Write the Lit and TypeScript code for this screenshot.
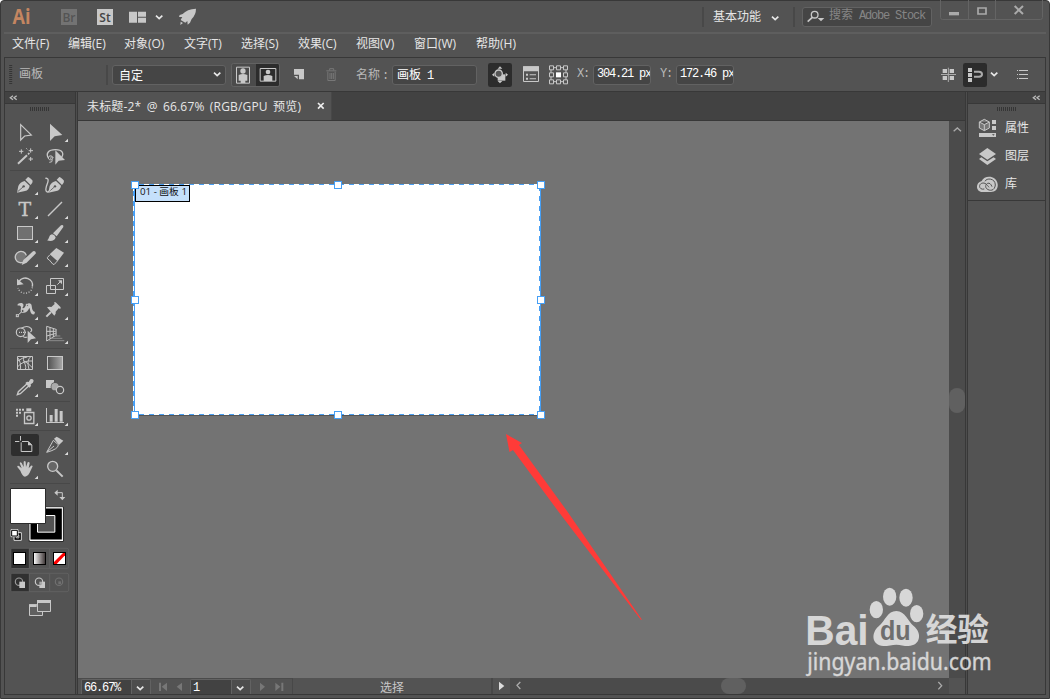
import { LitElement, html, css, svg, type SVGTemplateResult } from "lit";
import { customElement } from "lit/decorators.js";

const C = "#c8c8c8";

// Icons are drawn on a grid of three units to one pixel.
const icon = (x: number, y: number, w: number, h: number, body: SVGTemplateResult) =>
  html`<svg width=${w / 3} height=${h / 3} viewBox="${x} ${y} ${w} ${h}" fill=${C}>${body}</svg>`;

const chevron = icon(0, 0, 33, 27, svg`<path d="M6 8L15.500 17L25 8" fill="none" stroke="#e8e8e8" stroke-width="5"/>`);

type Tool = { x: number; y: number; more?: boolean; active?: boolean; body: SVGTemplateResult };

const nib = svg`<path d="M51 308L55 288Q60 276 74 273L89 287Q87 300 75 303Z M76 269L84 261Q88 261 98 272Q99 277 92 285Z"/>
  <path d="M53 305L69 291" stroke="#535353" stroke-width="2.500"/><circle cx="71" cy="289" r="3.500" fill="#535353"/>`;

const groups: Tool[][] = [
  [
    { x: 30, y: 90, body: svg`<path d="M62 104V150L74 138L94 135Z" fill="none" stroke=${C} stroke-width="3.500"/>` },
    { x: 120, y: 90, more: true, body: svg`<path d="M150 101V153L164 139L187 135Z"/>` },
    { x: 30, y: 162, body: svg`<path d="M54 221L81 196" stroke=${C} stroke-width="6"/><path d="M84 193L88 189" stroke=${C} stroke-width="5"/>
      <path d="M57 184H70M64 178V191M86 182H99M92 175V188M86 207H99M92 201V213M79 175L82 178" stroke=${C} stroke-width="3"/>` },
    { x: 120, y: 162, body: svg`<path d="M146 205C136 191 145 179 166 179C188 179 193 190 184 203" fill="none" stroke=${C} stroke-width="4"/>
      <path d="M160 203C155 194 142 197 146 207C149 212 159 209 158 203C156 198 150 203 153 207M157 208Q158 218 148 217" fill="none" stroke=${C} stroke-width="3"/>
      <path d="M166 181V224L176 212L195 210Z"/>` },
  ],
  [
    { x: 30, y: 249, more: true, body: nib },
    { x: 120, y: 249, body: svg`<g transform="translate(94 0)">${nib}</g><path d="M136 265C151 263 142 280 139 290C134 309 146 311 151 297" fill="none" stroke=${C} stroke-width="4"/>` },
    { x: 30, y: 321, more: true, body: svg`<text x="74.500" y="378" text-anchor="middle" font-family="DejaVu Serif" font-size="57" stroke=${C} stroke-width="1">T</text>` },
    { x: 120, y: 321, more: true, body: svg`<path d="M144 378L186 336" stroke=${C} stroke-width="4"/>` },
    { x: 30, y: 393, more: true, body: svg`<rect x="52.500" y="409.500" width="45" height="39" fill="#707070" stroke=${C} stroke-width="3"/>` },
    { x: 120, y: 393, more: true, body: svg`<path d="M141 451C149 448 145 435 156 433Q163 433 167 442C165 453 151 456 141 451M159 430L183 406Q191 402 190 411L170 439Z"/>` },
    { x: 30, y: 465, more: true, body: svg`<path d="M71 516A17 17 0 1 1 79 496" fill="#777" stroke=${C} stroke-width="4"/><path d="M65 525L70 510L99 484Q106 481 108 490L80 518Z"/>` },
    { x: 120, y: 465, more: true, body: svg`<path d="M149 493L169 474L192 488L173 514Z"/><path d="M149 495L142 503Q142 508 148 510L159 523L163 523L172 513" fill="none" stroke=${C} stroke-width="3"/>` },
  ],
  [
    { x: 30, y: 18, more: true, body: svg`<path d="M57 40A22 21 0 0 1 97 56" fill="none" stroke=${C} stroke-width="4.500"/><path d="M97 58A22 21 0 0 1 54 60" fill="none" stroke=${C} stroke-width="4" stroke-dasharray="3 5"/><path d="M51 32V52L71 49Z"/>` },
    { x: 120, y: 18, more: true, body: svg`<path d="M151.500 31.500H190.500V64.500H151.500ZM139.500 52.500H166.500V76.500H139.500ZM172 50L182 40" fill="none" stroke=${C} stroke-width="3"/><path d="M174 37H186V49Z"/>` },
    { x: 30, y: 90, more: true, body: svg`<path d="M53 108C69 100 75 111 67 120C76 124 76 107 88 106C101 107 90 128 105 132L103 139C88 141 92 123 88 120C83 130 77 139 63 131L62 125C64 119 64 111 53 113Z"/>
      <path d="M52 143L68 129L81 113" stroke=${C} stroke-width="3"/><g fill="#535353" stroke=${C} stroke-width="3"><rect x="49" y="140" width="6" height="6"/><circle cx="68" cy="129" r="4.500"/><rect x="79" y="109" width="6" height="6"/></g>` },
    { x: 120, y: 90, more: true, body: svg`<path d="M139 146L153 132" stroke=${C} stroke-width="6"/><path d="M141 118L148 116L154 117L164 108L162 103L167 103L182 118L181 123L176 121L167 131L167 137L163 143Z"/>` },
    { x: 30, y: 162, more: true, body: svg`<circle cx="62" cy="193" r="13" fill="none" stroke=${C} stroke-width="3.500"/><path d="M64 181Q82 170 93 181Q98 188 91 192M69 205Q75 210 82 207" fill="none" stroke=${C} stroke-width="3.500"/><path d="M57 193H80" stroke=${C} stroke-width="4" stroke-dasharray="3 3"/><path d="M83 188V225L93 214L108 211Z"/>` },
    { x: 120, y: 162, more: true, body: svg`<path d="M140 175L168 184V202L140 219ZM150 178V212M160 181V207M140 190L168 190M140 204L168 196" fill="none" stroke=${C} stroke-width="3"/><path d="M169 183V205" stroke="#999" stroke-width="4"/><path d="M165 204H181M156 211H187M146 218H193" stroke="#8a8a8a" stroke-width="3"/>` },
  ],
  [
    { x: 30, y: 249, body: svg`<path d="M52.500 265.500H97.500V304.500H52.500ZM72 266C65 278 82 291 76 304M52 280Q67 268 82 267M52 297Q71 276 97 279M70 278Q86 286 97 299M53 269Q64 282 61 304M92 266Q79 277 87 304" fill="none" stroke=${C} stroke-width="3"/>` },
    { x: 120, y: 249, body: svg`<linearGradient id="g"><stop stop-color="#505050"/><stop offset="1" stop-color="#a8a8a8"/></linearGradient><rect x="142.500" y="265.500" width="45" height="39" fill="url(#g)" stroke=${C} stroke-width="3"/>` },
    { x: 30, y: 321, more: true, body: svg`<path d="M81 347L55 371L52 380L61 377L87 353" fill="none" stroke=${C} stroke-width="4"/><path d="M76 345L81 341L86 342L91 334Q99 330 101 338Q101 344 92 349L93 354L88 359Z"/>` },
    { x: 120, y: 321, body: svg`<rect x="138" y="336" width="24" height="24"/><circle cx="165" cy="356" r="13" fill="#535353"/><circle cx="165" cy="356" r="11" fill="#aaa"/><circle cx="180" cy="366" r="11" fill="#535353" stroke=${C} stroke-width="3.500"/>` },
  ],
  [
    { x: 30, y: 408, more: true, body: svg`<path d="M48 422H54V428H48ZM57 422H63V428H57ZM66 422H72V428H66ZM48 431H54V437H48ZM57 431H63V437H57ZM48 440H54V446H48Z"/><rect x="79" y="421" width="15" height="9"/><path d="M73.500 433.500H101.500V466.500H73.500Z" fill="none" stroke=${C} stroke-width="4"/><circle cx="87" cy="450" r="6.500" fill="none" stroke=${C} stroke-width="4"/>` },
    { x: 120, y: 408, more: true, body: svg`<path d="M138 420H141V462H192V465H138ZM149 441H158V461H149ZM164 423H173V461H164ZM179 429H188V461H179Z"/>` },
  ],
  [
    { x: 30, y: 15, active: true, body: svg`<path d="M45 40.500H58M61.500 24V38M66 40.500H85L95.500 51V70.500H63.500V43" fill="none" stroke=${C} stroke-width="3"/><path d="M84 40L96 52H84Z"/>` },
    { x: 120, y: 15, more: true, body: svg`<path d="M140 73L160 37L175 50Q176 63 140 73ZM142 71L162 54" fill="none" stroke=${C} stroke-width="3"/><path d="M162 32L170 26Q174 28 190 38L177 51Z"/>` },
    { x: 30, y: 87, more: true, body: svg`<path d="M61 128L52 117Q51 112 57 114L65 121L59 105Q61 100 65 105L71 117L71 101Q74 97 77 101L78 117L83 103Q87 100 89 105L86 121L93 113Q97 111 98 115L91 130Q86 144 75 146Q67 145 61 128Z"/>` },
    { x: 120, y: 87, body: svg`<circle cx="158" cy="115" r="15" fill="#666" stroke=${C} stroke-width="4"/><path d="M169 127L188 146" stroke=${C} stroke-width="6"/>` },
  ],
];

const swatches = icon(30, 168, 180, 402, svg`
  <g stroke="#2b2b2b" stroke-width="3"><path d="M87.500 236.500H190.500V340.500H87.500Z" fill="#fff"/></g>
  <path d="M90 240H187V336H90Z" fill="#000" stroke="#fff" stroke-width="3"/><path d="M112.500 262.500H164.500V312.500H112.500Z" fill="#535353" stroke="#fff" stroke-width="3"/>
  <path d="M31.500 181.500H136.500V286.500H31.500Z" fill="#fff" stroke="#2b2b2b" stroke-width="3"/>
  <path d="M170 194H187V211" fill="none" stroke=${C} stroke-width="3"/><path d="M163 194L173 185V203ZM187 217L178 207H196Z"/>
  <path d="M42 314H64V337H42Z" fill="#000" stroke="#ddd" stroke-width="3"/><path d="M49 321H57V330H49Z" fill="#535353" stroke="#ddd" stroke-width="2"/><path d="M33 305H54V326H33Z" fill="#fff" stroke="#ddd" stroke-width="3"/><path d="M35 307H52V324H35Z" fill="#fff" stroke="#000" stroke-width="3"/>
  <g fill="none" stroke="#606060" stroke-width="3"><rect x="33" y="361" width="173" height="60" rx="5"/><rect x="33" y="436" width="173" height="55" rx="5"/></g>
  <path d="M34 362H87V420H34ZM34 437H87V490H34Z" fill="#303030"/><path d="M88 362V420M149 362V420M88 437V490M149 437V490" stroke="#606060" stroke-width="3"/>
  <linearGradient id="h"><stop stop-color="#fff"/><stop offset="1" stop-color="#3a3232"/></linearGradient>
  <g stroke="#000" stroke-width="3"><rect x="40.500" y="373.500" width="36" height="36" fill="#fff"/><rect x="100.500" y="373.500" width="36" height="36" fill="url(#h)"/><rect x="160.500" y="373.500" width="36" height="36" fill="#fff"/></g>
  <path d="M162 402V408H170L195 382V375H189Z" fill="#f00"/>
  <circle cx="57" cy="461" r="11" fill="none" stroke="#999" stroke-width="3.500"/><path d="M58 461H75V480H58Z"/>
  <path d="M118 461H135V480H118Z"/><circle cx="117" cy="461" r="11" fill="#535353" stroke=${C} stroke-width="3.500"/><path d="M118 461H126V470H118Z" fill="#aaa"/>
  <circle cx="177" cy="461" r="11" fill="none" stroke="#707070" stroke-width="3.500"/><path d="M175 460H183V468H175Z" fill="#707070"/>
  <path d="M88.500 530.500H127.500V562.500H88.500Z" fill="#606060" stroke=${C} stroke-width="3"/><path d="M112.500 517.500H151.500V550.500H112.500Z" fill="#606060" stroke=${C} stroke-width="3"/><path d="M111 516H153V525H111ZM87 529H110V537H87Z"/>`);

@customElement("ai-toolbox")
class AiToolbox extends LitElement {
  static styles = css`
    :host { display: block; }
    svg { display: block; }
    .groups { padding: 8px 0 0 5px; }
    .group { display: grid; grid-template-columns: 30px 30px; grid-auto-rows: 24px; width: 60px; padding-bottom: 2px; border-bottom: 1px solid #484848; margin-bottom: 2px; }
    .last { margin-bottom: 0; }
    .swatches { padding-left: 5px; }
  `;
  render() {
    return html`<div class="groups">${groups.map((g, i) => html`<div class="group ${i === groups.length - 1 ? "last" : ""}">
      ${g.map((t) => icon(t.x, t.y, 90, 72, svg`
        ${t.active ? svg`<rect x=${t.x + 3} y=${t.y + 3} width="84" height="66" rx="7" fill="#2e2e2e"/>` : ""}
        ${t.body}${t.more ? svg`<path transform="translate(${t.x} ${t.y})" d="M84 56V66H74Z" fill="#ddd"/>` : ""}`))}
    </div>`)}</div><div class="swatches">${swatches}</div>`;
  }
}

const titleIcons = {
  layout: icon(387, 25, 54, 40, svg`<path d="M387 30H411V63H387ZM414 30H438V45H414ZM414 48H438V63H414Z"/>`),
  rocket: icon(534, 20, 60, 60, svg`<path d="M588 25Q561 26 548 41L539 44L537 50L547 50Q544 55 542 59L556 67L562 62L563 73L570 67L575 56Q588 43 588 25ZM542 64L549 68L541 74Z"/>`),
  search: icon(315, 30, 57, 48, svg`<circle cx="341" cy="47" r="10" fill="none" stroke=${C} stroke-width="4"/><path d="M334 55L320 68" stroke=${C} stroke-width="5"/><path d="M350 57H370L360 67Z"/>`),
  windows: icon(720, 0, 312, 63, svg`<path d="M721.500 0V52Q721.500 58.500 728 58.500H1021Q1027.500 58.500 1027.500 52V0M805.500 0V57M886.500 0V57" fill="none" stroke="#646464" stroke-width="3"/><path d="M747 36H777V46H747Z" fill="#aaa"/><path d="M834 24H858V42H834Z" fill="none" stroke="#aaa" stroke-width="5"/><path d="M944 18L969 42M969 18L944 42" stroke="#aaa" stroke-width="6"/>`),
};

const controlIcons = {
  grip: icon(26, 192, 12, 62, svg`<path d="M31 195V252" stroke="#353535" stroke-width="9" stroke-dasharray="3 3"/>`),
  orient: icon(693, 186, 147, 72, svg`<rect x="694.500" y="187.500" width="144" height="69" rx="6" fill="#4b4b4b" stroke="#626262" stroke-width="3"/><path d="M768 189H833Q837 189 837 194V250Q837 255 833 255H768Z" fill="#2c2c2c"/><path d="M709.500 198.500H748.500V246.500H709.500ZM780.500 202.500H827.500V240.500H780.500Z" fill="none" stroke=${C} stroke-width="3"/><circle cx="729" cy="210" r="8"/><path d="M716 222Q729 216 742 222V239H736V246H722V239H716Z"/><circle cx="804" cy="213" r="7"/><path d="M791 225Q804 219 817 225V240H791Z"/>`),
  fresh: icon(882, 203, 36, 38, svg`<path d="M882 206H912V237H897V223H882ZM882 227H893V237Z"/>`),
  trash: icon(978, 202, 36, 42, svg`<path d="M979 210.500H1009M989 209V204H1001V209M983.500 213V239.500H1005.500V213M990 217V235M995 217V235M1000 217V235" fill="none" stroke="#777" stroke-width="3"/>`),
  move: icon(414, 186, 72, 72, svg`<rect x="414" y="186" width="72" height="72" rx="7" fill="#2c2c2c"/><path d="M443 220H466V239H443Z"/><circle cx="446" cy="218" r="11" fill="#555" stroke=${C} stroke-width="4"/><path d="M443 203L450 196L457 203ZM443 240L450 247L457 240ZM433 215L426 221L433 227ZM467 215L474 221L467 227Z"/>`),
  options: icon(519, 197, 51, 51, svg`<path d="M520.500 199.500H565.500V243.500H520.500Z" fill="none" stroke=${C} stroke-width="3"/><path d="M519 198H567V213H519ZM528 220H534V226H528ZM528 232H534V238H528ZM539 222H558V225H539ZM539 234H558V237H539Z"/>`),
  refpoint: icon(597, 194, 60, 60, svg`<path d="M603 202H648V244H603Z" fill="none" stroke=${C} stroke-width="3"/><g fill="#535353" stroke=${C} stroke-width="3"><path d="M598.500 196.500H610.500V208.500H598.500ZM619.500 196.500H631.500V208.500H619.500ZM640.500 196.500H652.500V208.500H640.500ZM598.500 217.500H610.500V229.500H598.500ZM640.500 217.500H652.500V229.500H640.500ZM598.500 238.500H610.500V250.500H598.500ZM619.500 238.500H631.500V250.500H619.500ZM640.500 238.500H652.500V250.500H640.500Z"/></g><path d="M618 216H633V231H618Z" fill="#fff"/>`),
  snap: icon(723, 198, 48, 48, svg`<path d="M728 204H741V216H728ZM749 204H762V216H749ZM728 225H741V237H728ZM749 225H762V237H749Z"/><path d="M745 200V243M723 220.500H768" stroke="#aaa" stroke-width="3"/>`),
  magnet: icon(789, 186, 72, 72, svg`<rect x="789" y="186" width="72" height="72" rx="7" fill="#2c2c2c"/><path d="M804 201H816V213H804ZM804 216H816V228H804ZM804 231H816V243H804Z"/><path d="M822 212.500H837Q846 213 846 220Q846 227 837 227.500H822" fill="none" stroke="#aaa" stroke-width="6"/>`),
  list: icon(945, 207, 42, 33, svg`<path d="M951 210H954V213H951ZM951 222H954V225H951ZM951 234H954V237H951ZM957 210H984V213H957ZM957 222H984V225H957ZM957 234H984V237H957Z"/>`),
};

const panelArrows = icon(27, 285, 30, 18, svg`<path d="M39 287L31 293L39 299M50 287L42 293L50 299" fill="none" stroke="#bbb" stroke-width="4"/>`);
const panelGrip = icon(90, 318, 60, 18, svg`<path d="M90 327H150" stroke="#353535" stroke-width="12" stroke-dasharray="3 3"/>`);

const dockItems = [
  { label: "属性", body: icon(828, 348, 72, 72, svg`<path d="M853 355L868 363V381L853 389L838 381V363ZM838 363L853 371L868 363M853 371V389" fill="#777" stroke=${C} stroke-width="3"/><path d="M876 357H888V369H876ZM876 375H888V387H876ZM837 396H888V408H837Z"/><path d="M876 400H884L880 404Z" fill="#444"/>`) },
  { label: "图层", body: icon(828, 432, 72, 72, svg`<path d="M862 441L888 459L862 476L837 459ZM844 469L862 481L881 469L888 474L862 492L837 474Z"/>`) },
  { label: "库", body: icon(828, 516, 72, 72, svg`<path d="M847 573C828 573 824 546 845 540C853 522 889 522 893 549C895 564 886 573 873 573Z"/><path d="M876 557C868 535 850 553 860 563C869 571 884 570 886 552C886 531 859 530 855 541M853 564C838 568 834 551 845 547C855 543 862 552 867 559" fill="none" stroke="#535353" stroke-width="3"/>`) },
];

@customElement("ai-canvas")
class AiCanvas extends LitElement {
  static styles = css`
    :host { display: block; background: #737373; }
    svg { display: block; }
    .tag { font: 9.5px "Open Sans", "Noto Sans CJK SC", sans-serif; }
  `;
  render() {
    const handles = [[135, 185], [338, 185], [541, 185], [135, 300], [541, 300], [135, 415], [338, 415], [541, 415]];
    return html`<svg width="871" height="557" viewBox="78 121 871 557">
      <rect x="133" y="184" width="408" height="232" fill="#555"/>
      <rect x="133" y="184" width="408" height="231" fill="#fff"/>
      <path d="M134.500 184V415M540.500 184V415" stroke="#469ff5"/>
      <path d="M139 184.500H541M139 414.500H541M133.500 191V415M539.500 186V415" stroke="#469ff5" stroke-dasharray="5 5"/>
      <rect x="135.500" y="185.500" width="54" height="16" fill="#c5e0fb" stroke="#000"/>
      <text class="tag" x="140" y="195" fill="#111" textLength="47" lengthAdjust="spacingAndGlyphs">01 - 画板 1</text>
      ${handles.map(([x, y]) => svg`<rect x=${x - 3.5} y=${y - 3.5} width="7" height="7" fill="#fff" stroke="#469ff5"/>`)}
      <path d="M506 434L522 443L519 445L567 511L641.800 619.400L641 620L558 511L513 450L509.500 452Z" fill="#ff3b38"/>
    </svg>`;
  }
}

const menus = ["文件(F)", "编辑(E)", "对象(O)", "文字(T)", "选择(S)", "效果(C)", "视图(V)", "窗口(W)", "帮助(H)"];

@customElement("app-root")
class AppRoot extends LitElement {
  static styles = css`
    :host { display: block; position: relative; width: 1050px; height: 699px; overflow: hidden; background: #fff; color: #e6e6e6; font: 12px "Open Sans", "Noto Sans CJK SC", sans-serif; }
    * { box-sizing: border-box; }
    svg { display: block; }
    .window { display: flex; flex-direction: column; height: 699px; background: #535353; border: 1px solid #383838; border-radius: 4px 4px 0 0; padding: 0 3px 3px; }
    .title { display: grid; grid-template-columns: 49px 36px 32px 25px 24px 524px 11px 57px 23px 9px 138px auto; height: 33px; padding-left: 8px; border-bottom: 2px solid #5e5e5e; align-items: center; flex: none; }
    .badge { width: 16px; height: 16px; text-align: center; font: 600 12px/17px "Open Sans", sans-serif; background: #737373; color: #545454; }
    .lit { background: #c8c8c8; color: #444; }
    .rule { width: 2px; height: 20px; background: #484848; }
    .workspace { line-height: 20px; white-space: nowrap; }
    .low { padding-top: 3px; }
    .search { display: flex; gap: 4px; width: 130px; height: 20px; border: 1px solid #626262; border-radius: 3px; background: #454545; color: #858585; align-items: center; padding-left: 3px; line-height: 17px; font-family: "Liberation Mono", "Noto Sans CJK SC", monospace; letter-spacing: -1.2px; white-space: nowrap; }
    .search .cn { letter-spacing: 0; }
    .search .words { padding-bottom: 1px; }
    .wins { align-self: start; margin-top: -1px; }
    .menu { display: grid; grid-template-columns: 56px 56px 60px 57px 57px 58px 58px 62px auto; height: 23px; padding-left: 8px; line-height: 20px; flex: none; white-space: nowrap; }
    .frame { display: flex; flex-direction: column; height: 638px; border: 1px solid #383838; flex: none; }
    .control { display: grid; grid-template-columns: 10px 87px 6px 119px 63px 32px 30px 36px 96px 35px 26px 28px 16px 67px 16px 265px 22px 26px 26px auto; padding-left: 4px; height: 34px; border-bottom: 1px solid #383838; align-items: center; flex: none; white-space: nowrap; }
    .label { color: #b8b8b8; padding-bottom: 2px; }
    .up { padding-bottom: 4px; }
    .mono { font-family: "Liberation Mono", "Noto Sans CJK SC", monospace; letter-spacing: -1.2px; }
    .mono .cn { letter-spacing: 0; }
    .colon { margin-left: -4px; }
    .field { display: flex; align-items: center; height: 20px; border: 1px solid #626262; border-radius: 3px; background: #454545; color: #fff; padding: 0 4px 1px; overflow: hidden; }
    .preset { width: 114px; justify-content: space-between; padding: 0 2px 0 6px; }
    .name { width: 85px; padding-bottom: 2px; }
    .coord { width: 58px; padding: 0 3px 1px; }
    .body { display: flex; flex: 1; }
    .tools { width: 71px; border-right: 1px solid #383838; }
    .split { width: 2px; background: #4d4d4d; border-right: 1px solid #383838; }
    .wide { width: 3px; border-left: 1px solid #383838; }
    .head { display: flex; height: 12px; background: #424242; border-bottom: 1px solid #383838; align-items: center; padding-left: 4px; }
    .dockhead { justify-content: flex-end; padding-right: 3px; }
    .grip { padding: 2px 0 0 25px; }
    .dock .grip { padding-left: 29px; }
    .main { display: grid; grid-template-columns: 871px 16px; grid-template-rows: 29px 557px 16px; width: 887px; }
    .tabs { grid-column: 1 / 3; background: #424242; border-bottom: 1px solid #383838; }
    .tab { display: flex; width: 254px; height: 28px; background: #535353; align-items: center; padding-left: 9px; justify-content: space-between; padding-right: 6px; white-space: nowrap; border-right: 1px solid #484848; }
    .doc { letter-spacing: .18px; word-spacing: 2px; }
    .vbar { display: grid; grid-template-rows: 267px 25px; background: #4b4b4b; }
    .thumb { background: #606060; border-radius: 8px; }
    .status { display: flex; grid-column: 1 / 3; background: #4b4b4b; }
    .nav { display: grid; grid-template-columns: 70px 39px 61px 42px; width: 215px; background: #535353; border-top: 1px solid #4b4b4b; padding-left: 3px; border-right: 1px solid #484848; }
    .box { display: flex; justify-content: space-between; height: 15px; border: 1px solid #626262; border-bottom: 0; border-radius: 2px 2px 0 0; background: #424242; color: #fff; padding-left: 2px; line-height: 16px; }
    .drop { width: 19px; background: #4d4d4d; border-left: 1px solid #626262; padding-left: 3px; padding-top: 4px; overflow: hidden; }
    .mode { width: 200px; height: 16px; background: #535353; border-right: 2px solid #484848; padding-left: 87px; line-height: 20px; color: #c8c8c8; }
    .play { width: 17px; background: #535353; }
    .hbar { display: grid; grid-template-columns: 211px 25px 203px; flex: 1; }
    .right { padding-left: 186px; }
    .corner { width: 16px; background: #535353; }
    .dock { flex: 1; }
    .items { padding-top: 3px; height: 89px; border-bottom: 1px solid #383838; }
    .item { display: grid; grid-template-columns: 29px auto; padding-left: 8px; height: 28px; align-items: center; line-height: 18px; }
    .item span { padding-bottom: 2px; }
    .mark { position: absolute; left: 780px; top: 570px; pointer-events: none; }
  `;

  render() {
    return html`
      <div class="window">
        <header class="title">
          <svg width="34" height="32" viewBox="12 0 34 32"><text x="12.500" y="23" font-family="Open Sans" font-weight="700" font-size="21" textLength="18" lengthAdjust="spacingAndGlyphs" fill="#c48661">Ai</text></svg>
          <div class="badge">Br</div><div class="badge lit">St</div>
          ${titleIcons.layout}${chevron}${titleIcons.rocket}
          <i class="rule"></i><span class="workspace">基本功能</span><span class="low">${chevron}</span><i class="rule"></i>
          <div class="search">${titleIcons.search}<span class="words"><span class="cn">搜索</span> Adobe Stock</span></div>
          <div class="wins">${titleIcons.windows}</div>
        </header>
        <nav class="menu">${menus.map((m) => html`<span>${m}</span>`)}</nav>
        <div class="frame">
          <div class="control">
            ${controlIcons.grip}<span class="label up">画板</span><i class="rule"></i>
            <div class="field preset"><span>自定</span>${chevron}</div>
            ${controlIcons.orient}${controlIcons.fresh}${controlIcons.trash}
            <span class="label mono"><span class="cn">名称</span> <span class="colon">:</span></span>
            <div class="field name mono"><span><span class="cn">画板</span> 1</span></div>
            ${controlIcons.move}${controlIcons.options}${controlIcons.refpoint}
            <span class="label mono">X:</span><div class="field coord mono">304.21 px</div>
            <span class="label mono">Y:</span><div class="field coord mono">172.46 px</div>
            ${controlIcons.snap}${controlIcons.magnet}${chevron}${controlIcons.list}
          </div>
          <div class="body">
            <aside class="tools"><div class="head">${panelArrows}</div><div class="grip">${panelGrip}</div><ai-toolbox></ai-toolbox></aside>
            <div class="split"></div>
            <main class="main">
              <div class="tabs"><div class="tab"><span class="doc">未标题-2* @ 66.67% (RGB/GPU 预览)</span>
                ${icon(0, 0, 24, 24, svg`<path d="M3 3L20 20M20 3L3 20" stroke="#eee" stroke-width="5"/>`)}</div></div>
              <ai-canvas></ai-canvas>
              <div class="vbar">${icon(747, 363, 48, 48, svg`<path d="M761 394L772 384L783 394" fill="none" stroke="#aaa" stroke-width="4"/>`)}<div class="thumb"></div></div>
              <footer class="status">
                <div class="nav">
                  <div class="box mono"><span>66.67%</span><span class="drop">${chevron}</span></div>
                  ${icon(453, 58, 120, 45, svg`<path d="M477 69H483V94H477ZM501 69V94L485 81ZM546 69V94L530 81Z" fill="#777"/>`)}
                  <div class="box mono"><span>1</span><span class="drop">${chevron}</span></div>
                  ${icon(753, 58, 123, 45, svg`<path d="M780 69V94L795 81ZM826 69V94L841 81ZM844 69H850V94H844Z" fill="#777"/>`)}
                </div>
                <div class="mode">选择</div>
                <div class="play">${icon(429, 57, 51, 45, svg`<path d="M447 68V94L463 81Z" fill="#ddd"/>`)}</div>
                <div class="hbar">${icon(480, 57, 60, 45, svg`<path d="M511 69L501 79L511 90" fill="none" stroke="#aaa" stroke-width="4"/>`)}
                  <div class="thumb"></div><div class="right">${icon(0, 0, 51, 45, svg`<path d="M19 12L29 23L19 34" fill="none" stroke="#aaa" stroke-width="4"/>`)}</div></div>
                <div class="corner"></div>
              </footer>
            </main>
            <div class="split wide"></div>
            <aside class="dock">
              <div class="head dockhead">${panelArrows}</div><div class="grip">${panelGrip}</div>
              <div class="items">${dockItems.map((d) => html`<div class="item">${d.body}<span>${d.label}</span></div>`)}</div>
            </aside>
          </div>
        </div>
      </div>
      <svg class="mark" width="270" height="129" viewBox="0 0 810 387" fill="#e2e2e2" opacity=".9">
        <text x="76" y="224" font-family="Liberation Sans" font-weight="bold" font-size="130" textLength="190" lengthAdjust="spacingAndGlyphs">Bai</text>
        <ellipse cx="289" cy="119" rx="20" ry="26"/><ellipse cx="329" cy="80" rx="20" ry="27"/><ellipse cx="378" cy="83" rx="20" ry="27"/><ellipse cx="410" cy="131" rx="20" ry="26"/>
        <path d="M349 123C376 123 383 153 402 169C428 191 420 228 385 228C370 228 362 224 349 224C336 224 325 228 310 228C275 226 272 190 296 169C317 151 322 123 349 123Z"/>
        <text x="300" y="211" font-family="Liberation Sans" font-weight="bold" font-size="84" textLength="92" lengthAdjust="spacingAndGlyphs" fill="#6e6e6e">du</text>
        <text x="437" y="214" font-family="Noto Sans CJK SC" font-weight="bold" font-size="96" textLength="190" lengthAdjust="spacingAndGlyphs">经验</text>
        <text x="82" y="299" font-family="Noto Sans" font-size="69" textLength="553" lengthAdjust="spacingAndGlyphs" stroke="#e2e2e2" stroke-width="1">jingyan.baidu.com</text>
      </svg>`;
  }
}
